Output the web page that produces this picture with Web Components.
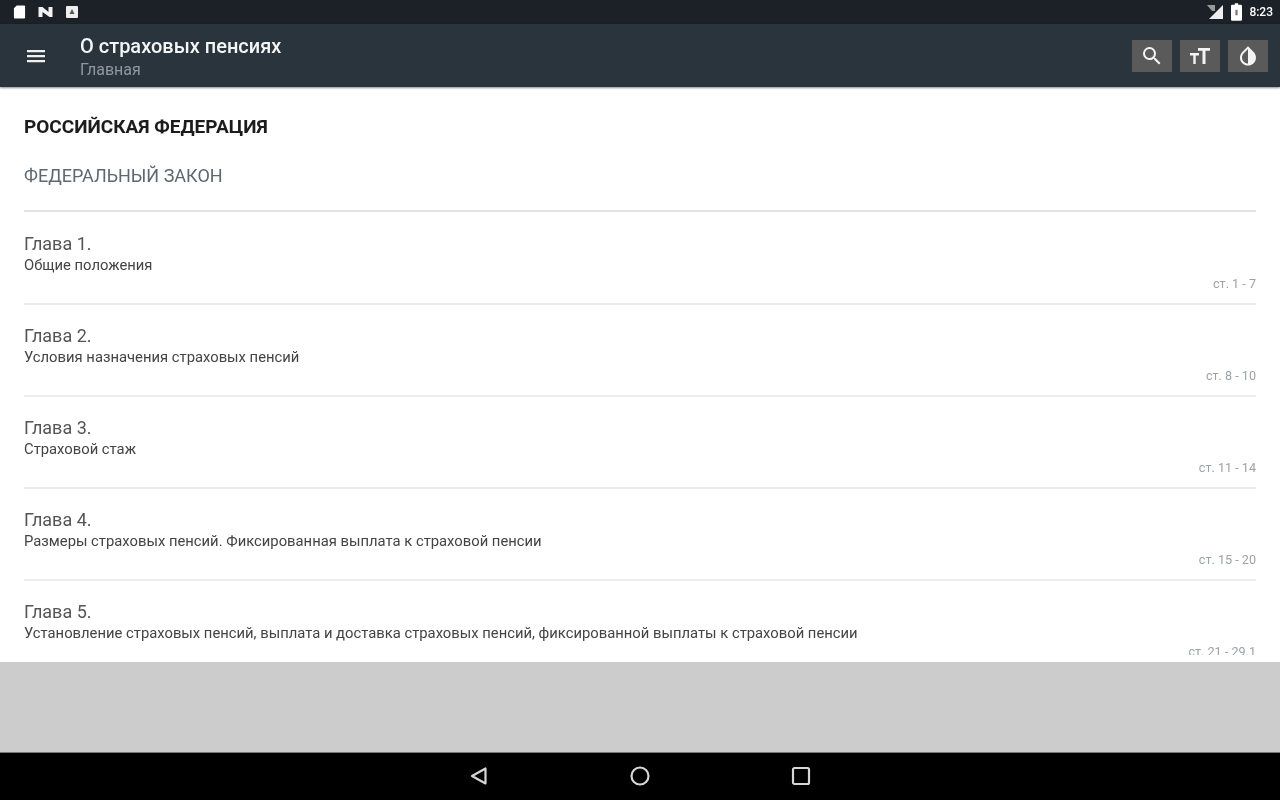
<!DOCTYPE html>
<html>
<head>
<meta charset="utf-8">
<style>
  html, body { margin: 0; height: 100%; }
  body { font-family: Roboto, "Noto Sans", sans-serif; }
  #screen { display: flex; flex-direction: column; height: 800px; width: 1280px; overflow: hidden; background: #cccccc; filter: blur(.7px); }
</style>
</head>
<body>
<div id="screen">
  <status-bar></status-bar>
  <app-bar title="О страховых пенсиях" subtitle="Главная"></app-bar>
  <law-page>
    <chapter-row name="Глава 1." desc="Общие положения" range="ст. 1 - 7"></chapter-row>
    <chapter-row name="Глава 2." desc="Условия назначения страховых пенсий" range="ст. 8 - 10"></chapter-row>
    <chapter-row name="Глава 3." desc="Страховой стаж" range="ст. 11 - 14"></chapter-row>
    <chapter-row name="Глава 4." desc="Размеры страховых пенсий. Фиксированная выплата к страховой пенсии" range="ст. 15 - 20"></chapter-row>
    <chapter-row name="Глава 5." desc="Установление страховых пенсий, выплата и доставка страховых пенсий, фиксированной выплаты к страховой пенсии" range="ст. 21 - 29.1"></chapter-row>
  </law-page>
  <nav-bar></nav-bar>
</div>

<template id="status-bar-template">
  <style>
    :host { display: flex; align-items: center; justify-content: space-between; height: 24px; flex: none; padding: 0 7px 0 13px; background: #1b2127; color: #fff; box-sizing: border-box; }
    .group { display: flex; align-items: center; gap: 12px; }
    .right { gap: 7px; }
    svg { display: block; }
    span { font-size: 12px; font-weight: 500; }
  </style>
  <div class="group">
    <svg width="13" height="16" viewBox="0 0 14 16"><path d="M4 1h8a1 1 0 0 1 1 1v12a1 1 0 0 1-1 1H2a1 1 0 0 1-1-1V4z" fill="#fff"/></svg>
    <svg width="15" height="12" viewBox="0 0 14 12"><path d="M0 1h4l6 5V1h4v10h-3L4 6v5H0z" fill="#f2f2f2"/></svg>
    <svg width="14" height="12" viewBox="0 0 12 12"><path d="M1 0h10a1 1 0 0 1 1 1v10a1 1 0 0 1-1 1H1a1 1 0 0 1-1-1V1a1 1 0 0 1 1-1z" fill="#eee"/><path d="M6 3l2.500 5h-5z" fill="#555"/></svg>
  </div>
  <div class="group right">
    <svg width="18" height="16" viewBox="0 0 18 16"><path d="M1 1h8v6H6z" fill="#999"/><path d="M17 1v14H3z" fill="#eee"/></svg>
    <svg width="11" height="18" viewBox="0 0 10 16"><path d="M3.500 0h3v1.500H9a1 1 0 0 1 1 1V15a1 1 0 0 1-1 1H1a1 1 0 0 1-1-1V2.500a1 1 0 0 1 1-1h2.500z" fill="#fff"/><rect x="4" y="6" width="2" height="5" fill="#777"/></svg>
    <span>8:23</span>
  </div>
</template>

<template id="app-bar-template">
  <style>
    :host { display: flex; align-items: center; height: 63px; flex: none; box-sizing: border-box; background: #2a343c; color: #fff; box-shadow: 0 1px 2px rgba(0,0,0,.45); position: relative; z-index: 1; }
    .menu { width: 80px; display: flex; justify-content: center; padding-right: 8px; box-sizing: border-box; }
    .text { flex: 1; display: flex; flex-direction: column; padding-top: 2px; }
    .title { font-size: 20px; font-weight: 500; line-height: 24px; color: #f4f5f5; }
    .sub { font-size: 16px; line-height: 18px; margin-top: 3px; color: #8f989e; }
    .actions { display: flex; gap: 8px; padding-right: 12px; padding-top: 1px; }
    .btn { width: 40px; height: 32px; background: #5a5a5a; display: flex; align-items: center; justify-content: center; }
    svg { display: block; }
  </style>
  <div class="menu">
    <svg width="20" height="14" viewBox="0 0 20 14"><path d="M1 1h18v2.200H1zM1 6h18v2.200H1zM1 11h18v2.200H1z" fill="#f0f0f0"/></svg>
  </div>
  <div class="text">
    <div class="title" id="title"></div>
    <div class="sub" id="sub"></div>
  </div>
  <div class="actions">
    <div class="btn"><svg width="24" height="24" viewBox="0 0 24 24"><path d="M15.500 14h-.790l-.280-.270A6.470 6.470 0 0 0 16 9.500 6.500 6.500 0 1 0 9.500 16c1.610 0 3.090-.590 4.230-1.570l.270.280v.790l5 4.990L20.490 19l-4.990-5zm-6 0C7.010 14 5 11.990 5 9.500S7.010 5 9.500 5 14 7.010 14 9.500 11.990 14 9.500 14z" fill="#f4f4f4"/></svg></div>
    <div class="btn"><svg width="22" height="22" viewBox="0 0 22 22"><path d="M9 3h12v2.800h-4.500V19h-3V5.800H9zM1 8h9v2.400H6.700V19H4.300v-8.600H1z" fill="#f4f4f4"/></svg></div>
    <div class="btn"><svg width="24" height="24" viewBox="0 0 24 24"><path d="M17.660 7.930L12 2.270 6.340 7.930c-3.120 3.120-3.120 8.190 0 11.310C7.900 20.800 9.950 21.580 12 21.580c2.050 0 4.100-.780 5.660-2.340 3.120-3.120 3.120-8.190 0-11.310zM12 19.590c-1.600 0-3.110-.620-4.240-1.760C6.620 16.690 6 15.190 6 13.590s.620-3.110 1.760-4.240L12 5.100v14.490z" fill="#f4f4f4"/></svg></div>
  </div>
</template>

<template id="law-page-template">
  <style>
    :host { display: block; height: 575px; flex: none; background: #fff; box-sizing: border-box; padding: 0 24px 7px; }
    .scroll { height: 100%; overflow: hidden; }
    h1 { margin: 0; padding-top: 29px; font-size: 19px; line-height: 22px; font-weight: 700; color: #1c1c1c; }
    h2 { margin: 0 0 1px; padding-top: 27px; font-size: 18px; line-height: 22px; font-weight: 400; color: #5f6870; padding-bottom: 23px; border-bottom: 2px solid #e2e2e2; }
  </style>
  <div class="scroll">
    <h1>РОССИЙСКАЯ ФЕДЕРАЦИЯ</h1>
    <h2>ФЕДЕРАЛЬНЫЙ ЗАКОН</h2>
    <slot></slot>
  </div>
</template>

<template id="chapter-row-template">
  <style>
    :host { display: block; height: 92px; box-sizing: border-box; padding-top: 21px; border-bottom: 2px solid #ececec; }
    .name { font-size: 18px; line-height: 20px; color: #555; }
    .desc { font-size: 14.800px; line-height: 16px; margin-top: 3px; color: #444; }
    .range { font-size: 12.600px; line-height: 14px; margin-top: 4px; text-align: right; color: #9aa3aa; }
  </style>
  <div class="name" id="name"></div>
  <div class="desc" id="desc"></div>
  <div class="range" id="range"></div>
</template>

<template id="nav-bar-template">
  <style>
    :host { display: flex; height: 48px; flex: none; margin-top: auto; background: #000; align-items: center; justify-content: center; gap: 141px; border-top: 1px solid #777; padding-bottom: 2px; box-sizing: border-box; }
    svg { display: block; }
  </style>
  <svg width="20" height="20" viewBox="0 0 20 20"><path d="M16.500 2.500v15L3 10z" fill="none" stroke="#d6d6d6" stroke-width="2.200" stroke-linejoin="round"/></svg>
  <svg width="20" height="20" viewBox="0 0 20 20"><circle cx="10" cy="10" r="8.500" fill="none" stroke="#d6d6d6" stroke-width="2.200"/></svg>
  <svg width="20" height="20" viewBox="0 0 20 20"><rect x="2" y="2" width="16" height="16" rx="1.500" fill="none" stroke="#d6d6d6" stroke-width="2.200"/></svg>
</template>

<script>
class BaseElement extends HTMLElement {
  static get is() {
    return '';
  }
  constructor() {
    super();
    let template = document.getElementById(`${this.constructor.is}-template`);
    this.attachShadow({mode: 'open'});
    this.shadowRoot.appendChild(template.content.cloneNode(true));
  }
  _text(id, attribute) {
    this.shadowRoot.getElementById(id).textContent = this.getAttribute(attribute);
  }
}

class StatusBar extends BaseElement {
  static get is() { return 'status-bar'; }
}

class AppBar extends BaseElement {
  static get is() { return 'app-bar'; }
  connectedCallback() {
    this._text('title', 'title');
    this._text('sub', 'subtitle');
  }
}

class LawPage extends BaseElement {
  static get is() { return 'law-page'; }
}

class ChapterRow extends BaseElement {
  static get is() { return 'chapter-row'; }
  connectedCallback() {
    this._text('name', 'name');
    this._text('desc', 'desc');
    this._text('range', 'range');
  }
}

class NavBar extends BaseElement {
  static get is() { return 'nav-bar'; }
}

[StatusBar, AppBar, LawPage, ChapterRow, NavBar].forEach((c) => customElements.define(c.is, c));
</script>
</body>
</html>
